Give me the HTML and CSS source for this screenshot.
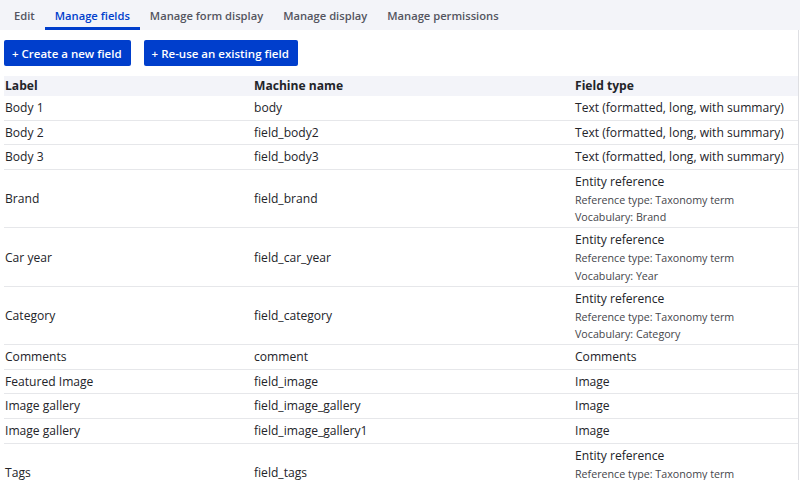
FILE: index.html
```html
<!DOCTYPE html>
<html lang="en">
<head>
<meta charset="utf-8">
<title>Manage fields</title>
<link rel="stylesheet" href="styles.css">
</head>
<body>
<nav class="tabs">
  <a class="tab">Edit</a>
  <a class="tab active">Manage fields</a>
  <a class="tab">Manage form display</a>
  <a class="tab">Manage display</a>
  <a class="tab">Manage permissions</a>
</nav>
<main class="content">
  <div class="actions">
    <a class="btn">+ Create a new field</a>
    <a class="btn">+ Re-use an existing field</a>
  </div>
  <table class="fields">
    <colgroup>
      <col class="c-label">
      <col class="c-machine">
      <col class="c-type">
    </colgroup>
    <thead>
      <tr><th>Label</th><th>Machine name</th><th>Field type</th></tr>
    </thead>
    <tbody>
      <tr><td>Body 1</td><td>body</td><td>Text (formatted, long, with summary)</td></tr>
      <tr><td>Body 2</td><td>field_body2</td><td>Text (formatted, long, with summary)</td></tr>
      <tr><td>Body 3</td><td>field_body3</td><td>Text (formatted, long, with summary)</td></tr>
      <tr class="tall"><td>Brand</td><td>field_brand</td><td><div class="main">Entity reference</div><div class="sub">Reference type: Taxonomy term</div><div class="sub">Vocabulary: Brand</div></td></tr>
      <tr class="tall"><td>Car year</td><td>field_car_year</td><td><div class="main">Entity reference</div><div class="sub">Reference type: Taxonomy term</div><div class="sub">Vocabulary: Year</div></td></tr>
      <tr class="tall"><td>Category</td><td>field_category</td><td><div class="main">Entity reference</div><div class="sub">Reference type: Taxonomy term</div><div class="sub">Vocabulary: Category</div></td></tr>
      <tr><td>Comments</td><td>comment</td><td>Comments</td></tr>
      <tr><td>Featured Image</td><td>field_image</td><td>Image</td></tr>
      <tr><td>Image gallery</td><td>field_image_gallery</td><td>Image</td></tr>
      <tr><td>Image gallery</td><td>field_image_gallery1</td><td>Image</td></tr>
      <tr class="tall"><td>Tags</td><td>field_tags</td><td><div class="main">Entity reference</div><div class="sub">Reference type: Taxonomy term</div><div class="sub">Vocabulary: Tags</div></td></tr>
    </tbody>
  </table>
</main>
</body>
</html>
```
FILE: styles.css
```css
* { box-sizing: border-box; }
html, body { margin: 0; padding: 0; background: #fff; }
body {
  font-family: "Open Sans", "Noto Sans", sans-serif;
  color: #232429;
  font-size: 12.1px;
  overflow: hidden;
  height: 480px;
}
.tabs {
  display: flex;
  background: #f3f4f9;
  height: 30px;
  padding-left: 4px;
  align-items: stretch;
}
.tab {
  display: flex;
  align-items: center;
  padding: 3px 10px 0;
  font-size: 11.2px;
  font-weight: 600;
  color: #545560;
  border-bottom: 3px solid transparent;
  white-space: nowrap;
}
.tab.active {
  color: #003ecc;
  border-bottom-color: #003ecc;
}
.content {
  padding-left: 4px;
  width: 799px;
  height: 450px;
  border-right: 1px solid #dedfe3;
}
.actions {
  display: flex;
  gap: 13px;
  padding-top: 10px;
  height: 46px;
}
.btn {
  display: flex;
  align-items: center;
  height: 26px;
  padding: 0 9px 0 8px;
  background: #003ecc;
  color: #fff;
  border-radius: 2px;
  font-size: 11.5px;
  font-weight: 600;
  white-space: nowrap;
}
.fields {
  width: 794px;
  border-collapse: collapse;
  table-layout: fixed;
}
.c-label { width: 249px; }
.c-machine { width: 321px; }
.c-type { width: 224px; }
.fields th {
  background: #f3f4f9;
  text-align: left;
  font-weight: 700;
  height: 20px;
  padding: 0 1px;
  line-height: 20px;
  color: #232429;
}
.fields td {
  padding: 2px 1px 1.6px;
  line-height: 20px;
  border-bottom: 1px solid #e6e7ea;
  vertical-align: middle;
  white-space: nowrap;
}
.fields tr.tall td { padding: 2px 1px 0.5px; }
.fields .main { line-height: 20px; }
.fields .sub {
  font-size: 10.7px;
  line-height: 17.5px;
  color: #45464b;
}
```
